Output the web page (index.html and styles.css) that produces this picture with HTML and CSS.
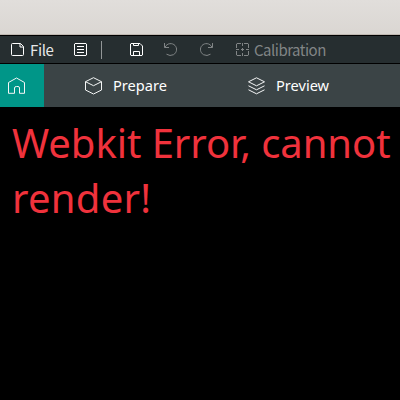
FILE: index.html
```
<!DOCTYPE html>
<html lang="en">
<head>
<meta charset="utf-8">
<title>Prepare</title>
<link rel="stylesheet" href="styles.css">
</head>
<body>
<div class="titlebar"></div>
<nav class="toolbar">
  <button class="tool file"><svg class="icon" viewBox="0 0 13 13"><path d="M1.500.5h8l3 3v8q0 1-1 1h-10q-1 0-1-1v-10q0-1 1-1zM9 .5v3.500h3.500"/></svg><span class="label">File</span></button>
  <button class="tool list" aria-label="Menu"><svg class="icon" viewBox="0 0 13 13"><path d="M1 .5h11l.5.5v11l-.5.5H1L.5 12V1zM3 3.500h7M3 6.500h7M3 9.500h7"/></svg></button>
  <span class="divider"></span>
  <button class="tool save" aria-label="Save"><svg class="icon" viewBox="0 0 13 13"><path d="M1 .5h9L12.500 3v9l-.5.5H1L.5 12V1zM3.500.5v2h5v-2M3.500 12.500v-4h6v4"/></svg></button>
  <button class="tool undo dim" aria-label="Undo"><svg class="icon" viewBox="0 0 13 13"><path d="M.5 0v4.500H5M1 4.300C3-.2 8.500-.3 11 2.500S13 9.500 9.500 11.700Q6 13.500 2.500 11.200"/></svg></button>
  <button class="tool redo dim" aria-label="Redo"><svg class="icon" viewBox="0 0 13 13"><path d="M12.500 0v4.500H8M12 4.300C10-.2 4.500-.3 2 2.500S0 9.500 3.500 11.700Q7 13.500 10.500 11.200"/></svg></button>
  <button class="tool calibration dim"><svg class="icon" viewBox="0 0 13 13"><path d="M5 .5H1L.5 1v4M8 .5h4l.5.5v4M.5 8v4l.5.5h4M12.500 8v4l-.5.5H8M6.500 0v3M6.500 10v3M0 6.500h3M10 6.500h3M5 6.500h3M6.500 5v3"/></svg><span class="label">Calibration</span></button>
</nav>
<div class="tabs">
  <div class="tab home"><svg class="tab-icon" viewBox="0 0 18 18"><path d="M.5 5.500L8.500 1l8 4.500v10.800h-5V11q0-1.500-1.500-1.500H8.500Q6.500 9.500 6.500 11v5.300h-6z"/></svg></div>
  <div class="tab prepare"><svg class="tab-icon" viewBox="0 0 18 18"><path d="M8.500.7l8 4v8.300l-8 4-8-4V4.700zM.5 4.700l8 4 8-4"/></svg><span class="tab-label">Prepare</span></div>
  <div class="tab preview"><svg class="tab-icon" viewBox="0 0 18 18"><path d="M8.500.8l8 4-8 4-8-4zM.5 8.800l8 4 8-4M.5 12.800l8 4 8-4"/></svg><span class="tab-label">Preview</span></div>
</div>
<main class="content"><p class="error"><span class="line first">Webkit Error, cannot</span> <span class="line second">render!</span></p></main>
</body>
</html>
```
FILE: styles.css
```
* { box-sizing: border-box; }
body {
  margin: 0;
  height: 400px;
  overflow: hidden;
  display: flex;
  flex-direction: column;
  background: #000;
  font-family: "Noto Sans", sans-serif;
}
.titlebar {
  height: 36px;
  flex: none;
  background: linear-gradient(#e1dedb, #dad6d2);
  border-bottom: 1px solid #000;
  box-shadow: inset 0 -1px #bfb8b1;
}
.toolbar {
  height: 28px;
  flex: none;
  display: flex;
  align-items: center;
  padding-left: 11px;
  background: #262e30;
  border-bottom: 1px solid #000;
}
.tool {
  display: flex;
  align-items: center;
  padding: 0;
  border: 0;
  background: none;
  color: #fff;
  font: 400 15px/27px "Noto Sans CJK SC", sans-serif;
  letter-spacing: -0.500px;
}
.dim { color: #818586; }
.icon {
  width: 13px;
  height: 13px;
  fill: none;
  stroke: currentColor;
}
.label {
  margin-left: 5px;
  height: 27px;
  white-space: nowrap;
}
.file { width: 63px; letter-spacing: -0.350px; }
.file .label { margin-left: 6px; color: #e6e8e8; }
.divider {
  width: 1px;
  height: 18px;
  margin: 0 28px 0 14px;
  background: #929697;
}
.undo { margin-left: 21px; }
.redo { margin-left: 23px; }
.calibration { margin-left: 23px; }
.tabs {
  height: 43px;
  flex: none;
  display: flex;
  background: #3b4446;
}
.tab {
  display: flex;
  align-items: center;
  gap: 10px;
  color: #fff;
  font-size: 14.600px;
}
.tab-label { padding-bottom: 2px; }
.tab-icon {
  width: 18px;
  height: 18px;
  flex: none;
  fill: none;
  stroke: #f4f6f6;
}
.home {
  width: 44px;
  padding-left: 8px;
  background: #009688;
}
.prepare { width: 163px; padding-left: 41px; }
.preview { padding-left: 41px; }
.content { padding: 8px 0 0 12px; }
.error {
  margin: 0;
  color: #f0323c;
  font-size: 40px;
  line-height: 55px;
}
.line { display: block; white-space: nowrap; }
.first { letter-spacing: -0.060px; }
.second { letter-spacing: 0.280px; }
```
